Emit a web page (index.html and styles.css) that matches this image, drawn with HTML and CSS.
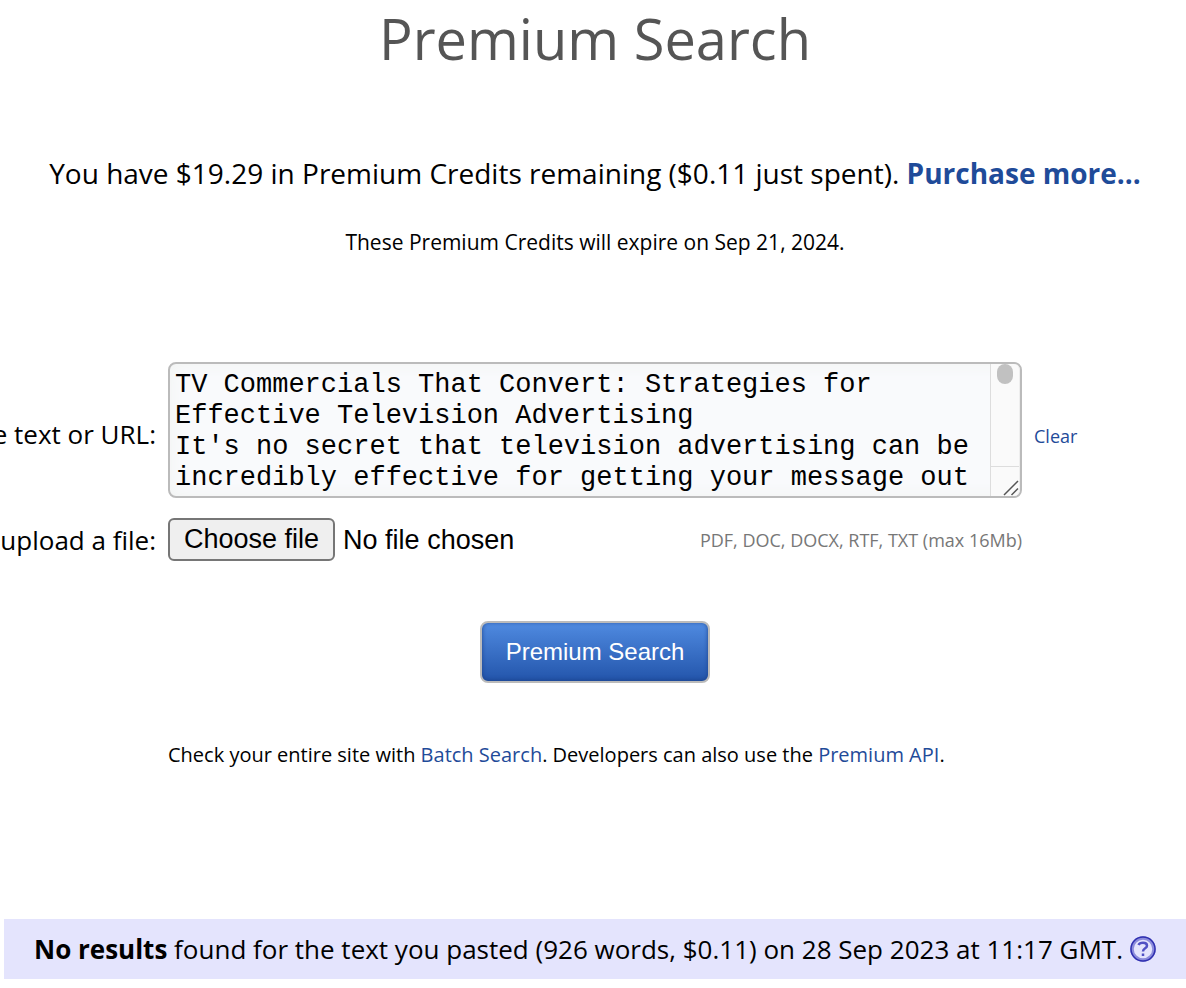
FILE: index.html
```
<!DOCTYPE html>
<html lang="en">
<head>
  <meta charset="UTF-8">
  <meta name="viewport" content="width=device-width, initial-scale=1.0">
  <title>Premium Search</title>
  <link rel="stylesheet" href="styles.css">
</head>
<body>
  <h1>Premium Search</h1>

  <p class="credits">You have $19.29 in Premium Credits remaining ($0.11 just spent). <a href="#">Purchase more...</a></p>
  <p class="expiry">These Premium Credits will expire on Sep 21, 2024.</p>

  <form class="search">
    <label class="label text-label" for="text">e text or URL:</label>
    <div class="text-wrap">
      <textarea id="text" name="text" rows="4" spellcheck="false">TV Commercials That Convert: Strategies for Effective Television Advertising
It's no secret that television advertising can be incredibly effective for getting your message out</textarea>
      <div class="scrollbar" aria-hidden="true">
        <div class="thumb"></div>
        <svg class="grip" width="16" height="16" viewBox="0 0 16 16">
          <path d="M1 15L15 1M8.500 15L15 8.500" fill="none" stroke="#555" stroke-width="1.500"/>
        </svg>
      </div>
    </div>
    <a class="clear" href="#">Clear</a>

    <label class="label file-label" for="file">upload a file:</label>
    <div class="file-row">
      <div class="file">
        <input type="file" id="file" name="file">
        <span class="file-button">Choose file</span>
        <span>No file chosen</span>
      </div>
      <span class="formats">PDF, DOC, DOCX, RTF, TXT (max 16Mb)</span>
    </div>

    <button type="submit">Premium Search</button>

    <p class="more">Check your entire site with <a href="#">Batch Search</a>. Developers can also use the <a href="#">Premium API</a>.</p>
  </form>

  <div class="results">
    <span><b>No results</b> found for the text you pasted (926 words, $0.11) on 28 Sep 2023 at 11:17 GMT.</span>
    <a class="help" href="#" aria-label="Help">
      <svg width="26" height="26" viewBox="0 0 26 26" fill="none">
        <circle cx="13" cy="13" r="11" stroke="#8c8cdc" stroke-width="3.500"/>
        <circle cx="13" cy="13" r="12" stroke="#3030b0" stroke-width="1.500"/>
        <path d="M8.500 9C9.300 7.200 11 6.800 13 6.800C15.500 6.800 17 7.900 17 9.700C17 12.500 13 12 13 15.500" stroke="#5050c4" stroke-width="2.500"/>
        <path d="M13 17.500V20" stroke="#5050c4" stroke-width="2.500"/>
      </svg>
    </a>
  </div>
</body>
</html>
```

FILE: styles.css
```
* {
  margin: 0;
  padding: 0;
  box-sizing: border-box;
}

body {
  font-family: "Open Sans", sans-serif;
  background-color: #fff;
  color: #000;
  overflow-x: hidden;
}

a {
  color: #1f4b99;
  text-decoration: none;
}

h1 {
  font-size: 56px;
  line-height: 76px;
  font-weight: 400;
  color: #555;
  text-align: center;
  padding-left: 4px;
}

.credits {
  margin-top: 77px;
  padding-left: 4px;
  font-size: 28px;
  line-height: 40px;
  text-align: center;
}

.credits a {
  font-weight: 700;
}

.expiry {
  margin-top: 33px;
  padding-left: 4px;
  font-size: 21px;
  line-height: 32px;
  text-align: center;
}

.search {
  display: grid;
  grid-template-columns: 156px 1fr 152px;
  column-gap: 12px;
  align-items: center;
  margin-top: 104px;
}

.label {
  display: flex;
  justify-content: flex-end;
  font-size: 26px;
  line-height: 36px;
  white-space: nowrap;
}

.text-label {
  padding-top: 8px;
}

.text-wrap {
  position: relative;
  height: 136px;
}

textarea {
  display: block;
  width: 100%;
  height: 100%;
  padding: 6px 36px 4px 5px;
  border: 2px solid #bbb;
  border-radius: 8px;
  background-color: #f9fafc;
  box-shadow: inset 0 0 16px #f1f3f1;
  font-family: "Liberation Mono", monospace;
  font-size: 27px;
  line-height: 31px;
  resize: none;
  overflow: hidden;
}

.scrollbar {
  position: absolute;
  top: 2px;
  right: 2px;
  bottom: 2px;
  width: 30px;
  border-left: 1px solid #ddd;
  border-right: 1px solid #eee;
  border-radius: 0 6px 6px 0;
  background-color: #fafafa;
  pointer-events: none;
}

.thumb {
  width: 16px;
  height: 20px;
  margin: 0 auto;
  border-radius: 8px;
  background-color: #c1c1c1;
}

.grip {
  position: absolute;
  right: 0;
  bottom: 0;
}

.scrollbar::after {
  content: "";
  position: absolute;
  left: 0;
  right: 0;
  bottom: 29px;
  border-top: 1px solid #ddd;
}

.clear {
  padding-top: 12px;
  font-size: 18px;
  line-height: 24px;
}

.file-label,
.file-row {
  margin-top: 20px;
}

.file-row {
  display: flex;
  justify-content: space-between;
  align-items: center;
  grid-column: 2;
}

.file {
  position: relative;
  display: flex;
  align-items: center;
  gap: 8px;
  font-family: "Liberation Sans", sans-serif;
  font-size: 27px;
  line-height: 38px;
}

/* real input sits over the styled button */
.file input {
  position: absolute;
  inset: 0;
  width: 100%;
  opacity: 0;
  cursor: pointer;
}

.file-button {
  padding: 0 14px 1px;
  border: 2px solid #767676;
  border-radius: 6px;
  background-color: #efefef;
}

.formats {
  font-size: 18px;
  line-height: 24px;
  color: #777;
}

button {
  grid-column: 2;
  justify-self: center;
  margin-top: 60px;
  width: 230px;
  height: 62px;
  border: 2px solid #bbb;
  border-radius: 8px;
  background: linear-gradient(#4f8ae0, #2355ab);
  box-shadow: inset 0 -1px 4px #1c4590;
  color: #fff;
  font-family: "Liberation Sans", sans-serif;
  font-size: 24px;
  cursor: pointer;
}

.more {
  grid-column: 2;
  margin-top: 56px;
  font-size: 20px;
  line-height: 32px;
}

.results {
  display: flex;
  justify-content: center;
  align-items: center;
  gap: 7px;
  margin: 148px 0 0 4px;
  height: 60px;
  background-color: #e4e4fd;
  font-size: 26px;
  line-height: 36px;
}

.help {
  display: flex;
}
```
